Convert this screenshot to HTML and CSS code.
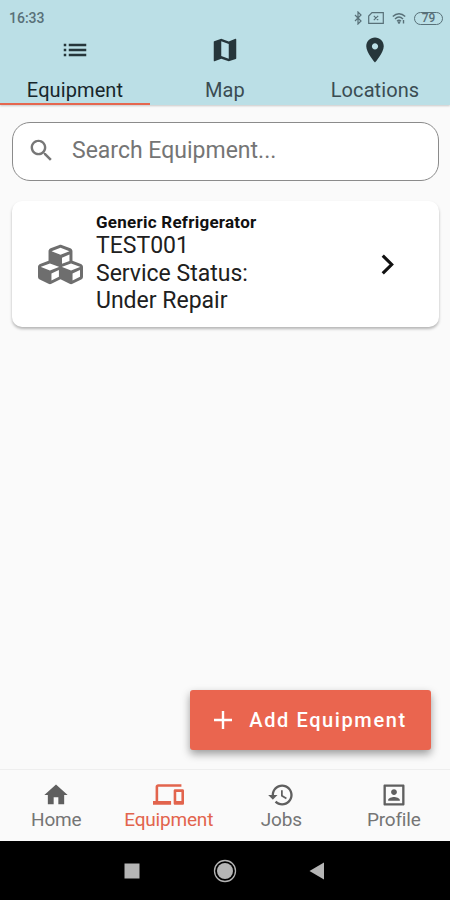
FILE: index.html
```html
<!DOCTYPE html>
<html lang="en">
<head>
    <meta charset="UTF-8">
    <meta name="viewport" content="width=device-width, initial-scale=1.0">
    <title>Equipment</title>
    <link rel="stylesheet" href="styles.css">
</head>
<body>

<header class="top">
    <div class="status-bar">
        <span class="clock">16:33</span>
        <div class="status-icons">
            <svg width="8" height="14" viewBox="0 0 8 14" fill="none" stroke="currentColor" stroke-width="1.2"><path d="M1 4l6 6-3 3V1l3 3-6 6"/></svg>
            <svg width="16" height="12" viewBox="0 0 16 12" fill="none" stroke="currentColor" stroke-width="1.2"><path d="M4 .7h11.3v10.6H.7V4zM5.8 3.8l4.4 4.4M10.2 3.8L5.8 8.2"/></svg>
            <svg width="14" height="12" viewBox="0 0 14 12" fill="none" stroke="currentColor" stroke-width="1.4"><path d="M.8 4.5C4.5.8 9.5.8 13.2 4.5M3 7c2.5-2.4 5.500-2.4 8 0M5 9.2c1.3-1.2 2.7-1.2 4 0M11.500 8v3.5"/><circle cx="7" cy="10.5" r=".6"/></svg>
            <span class="battery">79</span>
        </div>
    </div>
    <nav class="tabs">
        <a class="tab active">
            <svg class="tab-icon" viewBox="0 0 24 24"><path d="M3 13h2v-2H3v2zm0 4h2v-2H3v2zm0-8h2V7H3v2zm4 4h14v-2H7v2zm0 4h14v-2H7v2zM7 7v2h14V7H7z"/></svg>
            <span>Equipment</span>
        </a>
        <a class="tab">
            <svg class="tab-icon" viewBox="0 0 24 24"><path d="M20.5 3l-.16.03L15 5.1 9 3 3.36 4.9c-.21.07-.36.25-.36.48V20.5c0 .28.22.5.5.5l.16-.03L9 18.9l6 2.1 5.64-1.9c.21-.07.36-.25.36-.48V3.500c0-.28-.22-.5-.5-.5zM15 19l-6-2.11V5l6 2.11V19z"/></svg>
            <span>Map</span>
        </a>
        <a class="tab">
            <svg class="tab-icon" viewBox="0 0 24 24"><path d="M12 2C8.13 2 5 5.13 5 9c0 5.25 7 13 7 13s7-7.75 7-13c0-3.87-3.13-7-7-7zm0 9.5c-1.38 0-2.5-1.12-2.5-2.5s1.12-2.5 2.5-2.5 2.5 1.12 2.5 2.5-1.12 2.5-2.5 2.5z"/></svg>
            <span>Locations</span>
        </a>
    </nav>
</header>

<main class="content">
    <label class="search">
        <svg class="search-icon" viewBox="0 0 24 24"><path d="M15.5 14h-.79l-.28-.27C15.41 12.59 16 11.11 16 9.5 16 5.91 13.09 3 9.5 3S3 5.91 3 9.5 5.91 16 9.5 16c1.61 0 3.09-.59 4.23-1.57l.27.28v.79l5 4.99L20.49 19l-4.99-5zm-6 0C7.01 14 5 11.99 5 9.5S7.01 5 9.5 5 14 7.01 14 9.5 11.99 14 9.5 14z"/></svg>
        <input type="text" placeholder="Search Equipment...">
    </label>

    <div class="card">
        <svg class="cubes" viewBox="0 0 512 512"><path d="M488.6 250.2L392 214V105.5c0-15-9.3-28.4-23.4-33.7l-100-37.5c-8.1-3.1-17.1-3.1-25.3 0l-100 37.5c-14.1 5.3-23.4 18.7-23.4 33.7V214l-96.6 36.2C9.3 255.5 0 268.9 0 283.9V394c0 13.6 7.7 26.1 19.9 32.2l100 50c10.1 5.1 22.1 5.1 32.2 0l103.9-52 103.9 52c10.1 5.1 22.1 5.1 32.2 0l100-50c12.2-6.1 19.9-18.6 19.9-32.2V283.9c0-15-9.3-28.4-23.4-33.7zM358 214.8l-85 31.9v-68.2l85-37v73.3zM154 104.1l102-38.2 102 38.2v.6l-102 41.4-102-41.4v-.6zm84 291.1l-85 42.5v-79.1l85-38.8v75.4zm0-112l-102 41.4-102-41.4v-.6l102-38.2 102 38.2v.6zm240 112l-85 42.5v-79.1l85-38.8v75.4zm0-112l-102 41.4-102-41.4v-.6l102-38.2 102 38.2v.6z"/></svg>
        <div class="card-text">
            <h2>Generic Refrigerator</h2>
            <p>TEST001</p>
            <p>Service Status:</p>
            <p>Under Repair</p>
        </div>
        <svg class="chevron" viewBox="0 0 13 20"><path d="M1.500 1.500L10 10l-8.500 8.500"/></svg>
    </div>

    <button class="add-button">
        <svg width="18" height="18" viewBox="0 0 18 18"><path d="M9 0v18M0 9h18"/></svg>
        <span>Add Equipment</span>
    </button>
</main>

<nav class="bottom-nav">
    <a class="nav-item">
        <svg class="nav-icon" viewBox="0 0 24 24"><path d="M10 20v-6h4v6h5v-8h3L12 3 2 12h3v8z"/></svg>
        <span>Home</span>
    </a>
    <a class="nav-item active">
        <svg class="nav-icon" viewBox="0 0 24 24"><path d="M4 6h18V4H4c-1.1 0-2 .9-2 2v11H0v3h14v-3H4V6zm19 2h-6c-.55 0-1 .45-1 1v10c0 .55.45 1 1 1h6c.55 0 1-.45 1-1V9c0-.55-.45-1-1-1zm-1 9h-4v-7h4v7z"/></svg>
        <span>Equipment</span>
    </a>
    <a class="nav-item">
        <svg class="nav-icon" viewBox="0 0 24 24"><path d="M13 3c-4.97 0-9 4.03-9 9H1l3.89 3.89.07.14L9 12H6c0-3.87 3.13-7 7-7s7 3.13 7 7-3.13 7-7 7c-1.93 0-3.68-.79-4.94-2.06l-1.42 1.42C8.27 19.99 10.51 21 13 21c4.97 0 9-4.03 9-9s-4.03-9-9-9zm-1 5v5l4.28 2.54.72-1.21-3.5-2.08V8H12z"/></svg>
        <span>Jobs</span>
    </a>
    <a class="nav-item">
        <svg class="nav-icon" viewBox="0 0 24 24"><path d="M19 5v14H5V5h14m1.100-2H3.900c-.5 0-.9.4-.9.9v16.200c0 .4.4.9.9.9h16.200c.4 0 .9-.5.9-.9V3.900c0-.5-.5-.9-.9-.9zM12 12c1.380 0 2.500-1.120 2.500-2.500S13.380 7 12 7 9.500 8.120 9.500 9.500 10.620 12 12 12zm5 5H7v-.8c0-1.650 3.300-2.500 5-2.500s5 .85 5 2.500v.8z"/></svg>
        <span>Profile</span>
    </a>
</nav>

<div class="system-nav">
    <svg width="24" height="24" viewBox="0 0 24 24"><path d="M4.500 4.500h15v15h-15z"/></svg>
    <svg width="24" height="24" viewBox="0 0 24 24"><circle cx="12" cy="12" r="8"/><circle class="ring" cx="12" cy="12" r="10.5"/></svg>
    <svg width="24" height="24" viewBox="0 0 24 24"><path d="M3.500 12L18 3.500v17z"/></svg>
</div>

</body>
</html>
```
FILE: styles.css
```css
* {
    box-sizing: border-box;
}
body {
    font-family: Roboto, sans-serif;
    margin: 0;
    height: 900px;
    display: flex;
    flex-direction: column;
    background-color: #fafafa;
    overflow: hidden;
}

/* Header */
.top {
    height: 105px;
    background-color: #bbdfe6;
    box-shadow: 0 1px 2px rgba(0, 0, 0, 0.2);
}
.status-bar {
    height: 35px;
    padding: 1px 7px 0 9px;
    display: flex;
    align-items: center;
    justify-content: space-between;
    color: #587078;
}
.clock {
    font-size: 14px;
    font-weight: 500;
}
.status-icons {
    display: flex;
    align-items: center;
    gap: 8px;
}
.status-icons svg:first-child {
    margin-right: -2px;
}
.battery {
    width: 29px;
    height: 13px;
    border: 1px solid #587078;
    border-radius: 7px;
    font-size: 12px;
    font-weight: 500;
    line-height: 11px;
    text-align: center;
}
.tabs {
    display: flex;
    height: 70px;
}
.tab {
    flex: 1;
    display: flex;
    flex-direction: column;
    align-items: center;
    gap: 13px;
    border-bottom: 2px solid transparent;
    color: #3a4c52;
    font-size: 20px;
    line-height: 24px;
    letter-spacing: 0.1px;
}
.tab.active {
    color: #17262b;
    border-bottom-color: #e5674f;
}
.tab-icon {
    width: 30px;
    height: 30px;
    fill: #26363b;
}

/* Equipment list */
.content {
    flex: 1;
    display: flex;
    flex-direction: column;
    padding: 17px 11px 19px 12px;
}
.search {
    height: 59px;
    display: flex;
    align-items: center;
    padding: 0 14px;
    gap: 16px;
    background-color: white;
    border: 1px solid #8b8b8b;
    border-radius: 18px;
}
.search-icon {
    width: 29px;
    height: 29px;
    margin-top: -2px;
    fill: #777;
}
.search input {
    flex: 1;
    min-width: 0;
    border: none;
    outline: none;
    padding: 0 0 3px;
    background: none;
    font-family: inherit;
    font-size: 23px;
}
.search input::placeholder {
    color: #757575;
}
.card {
    height: 126px;
    margin-top: 20px;
    padding: 0 44px 0 26px;
    display: flex;
    align-items: center;
    background-color: white;
    border-radius: 10px;
    box-shadow: 0 2px 3px rgba(0, 0, 0, 0.28);
}
.cubes {
    width: 45px;
    height: 45px;
    fill: #6e6e6e;
}
.card-text {
    flex: 1;
    padding-left: 13px;
    color: #202020;
}
.card-text h2 {
    margin: 0;
    font-size: 17px;
    line-height: 18px;
    letter-spacing: 0.25px;
    color: #111;
}
.card-text p {
    margin: 0;
    font-size: 23px;
    line-height: 27.5px;
}
.card-text p:nth-child(2) {
    padding-top: 1px;
}
.chevron {
    width: 14px;
    height: 21px;
    fill: none;
    stroke: #111;
    stroke-width: 3;
}
.add-button {
    width: 241px;
    height: 60px;
    margin: auto 8px 0 0;
    padding: 0;
    align-self: flex-end;
    display: flex;
    align-items: center;
    justify-content: center;
    gap: 17px;
    border: none;
    border-radius: 3px;
    background-color: #ea654f;
    color: white;
    font-family: inherit;
    font-size: 20px;
    font-weight: 500;
    letter-spacing: 1.6px;
    box-shadow: 0 4px 8px rgba(0, 0, 0, 0.38);
}
.add-button svg {
    stroke: white;
    stroke-width: 2.4;
}

/* Bottom navigation */
.bottom-nav {
    height: 72px;
    display: flex;
    border-top: 1px solid #eee;
    padding-top: 11px;
}
.nav-item {
    flex: 1;
    display: flex;
    flex-direction: column;
    align-items: center;
    color: #757575;
    font-size: 19px;
    line-height: 22px;
    letter-spacing: -0.2px;
}
.nav-item.active {
    color: #e2644d;
}
.nav-icon {
    width: 28px;
    height: 28px;
    fill: #5f5f5f;
}
.nav-item.active .nav-icon {
    width: 31px;
    height: 31px;
    margin: -2px 0 -1px;
    fill: currentColor;
}
.system-nav {
    height: 59px;
    display: flex;
    align-items: center;
    justify-content: center;
    gap: 69px;
    background-color: black;
}
.system-nav svg {
    fill: #b5b5b5;
}
.system-nav .ring {
    fill: none;
    stroke: #b5b5b5;
    stroke-width: 1.3;
}
```
